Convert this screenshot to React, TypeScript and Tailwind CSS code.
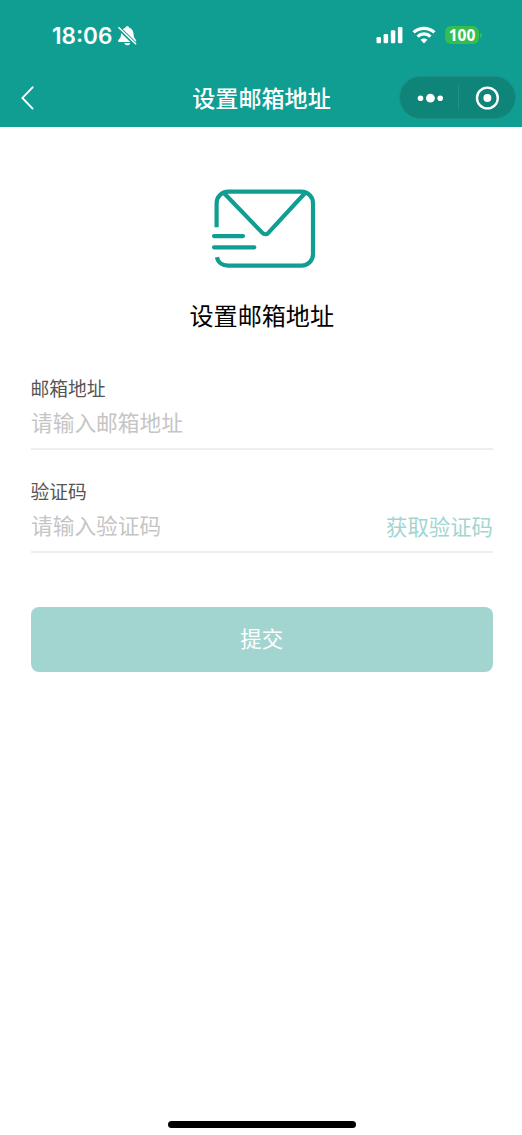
function StatusBar() {
  return (
    <div className="flex h-[70px] items-center text-white">
      <span className="ml-[52px] w-[61px] pt-px font-['Inter'] text-[22.5px] font-semibold leading-[70px]">18:06</span>
      {/* Muted bell */}
      <svg className="ml-[4.5px] mt-[2px]" width="19" height="20" viewBox="0 0 19 20" fill="none">
        <path
          d="M9.3 0.3c-1 0-1.8.6-2 1.5C4.3 2.8 3.2 5 3 8.3c-.1 2.8-.9 4-2.1 5.2-1.3 1.4-.8 2.5.4 2.5h15.8c1.2 0 1.6-1.2.5-2.5-1.2-1.3-1.9-2.4-2-5.2-.2-3.3-1.4-5.5-4.3-6.5-.2-.9-1-1.5-2-1.5Z"
          fill="currentColor"
        />
        <path d="M6.4 16.9h5.9c-.4 1.5-1.5 2.3-2.9 2.3s-2.6-.8-3-2.3Z" fill="currentColor" />
        <path d="M0 1.2 17.6 18.4" stroke="#119e92" strokeWidth="4" />
        <path d="M1 1.7 17.6 17.8" stroke="currentColor" strokeWidth="1.6" strokeLinecap="round" />
      </svg>
      <div className="ml-auto mr-[40px] flex items-center">
        <svg width="27" height="18" viewBox="0 0 27 18" fill="currentColor">
          <rect x="0.5" y="11" width="4.5" height="6.3" rx="1.3" />
          <rect x="7.6" y="8" width="4.5" height="9.3" rx="1.3" />
          <rect x="14.8" y="4.3" width="4.5" height="13" rx="1.3" />
          <rect x="21.9" y="0.9" width="4.5" height="16.4" rx="1.3" />
        </svg>
        <svg className="ml-[9px]" width="24" height="18" viewBox="0 0 24 18" fill="none" stroke="currentColor" strokeWidth="3.2">
          <path d="M1.6 6.4C7.5 .9 16.5.9 22.4 6.4" />
          <path d="M5.6 10.6C9.3 7 14.7 7 18.4 10.6" />
          <path d="m12 17.4-3.4-3.6c1.8-1.6 5-1.6 6.8 0Z" fill="currentColor" stroke="none" />
        </svg>
        <span className="ml-[9px] flex h-[18px] w-[34px] items-center justify-center rounded-[6px] bg-[#34be50] pt-px font-['Noto_Sans'] text-[15.5px] font-bold leading-none">
          100
        </span>
        <span className="ml-px h-[5px] w-[2px] rounded-r-full bg-[#34be50]" />
      </div>
    </div>
  );
}

function NavBar() {
  return (
    <div className="grid h-[56px] grid-cols-[122px_1fr_122px] items-center text-white">
      <button className="ml-[20px] w-[16px]">
        <svg width="16" height="24" viewBox="0 0 16 24" fill="none" stroke="currentColor" strokeWidth="1.9">
          <path d="M12.6 1.3 2.4 11.9 12.6 22.6" strokeLinecap="round" />
        </svg>
      </button>
      <h1 className="-mt-[3px] pl-px text-center text-[23.1px] font-medium leading-[30px]">设置邮箱地址</h1>
      <div className="-ml-px -mt-px flex h-[43px] w-[117px] items-center rounded-full border border-[#1c8f84] bg-[#0f8479]">
        <button className="flex w-[58px] justify-end pr-px">
          <svg width="40" height="12" viewBox="0 0 40 12" fill="currentColor">
            <circle cx="3.5" cy="6.2" r="2.8" />
            <circle cx="13.4" cy="6.2" r="4.4" />
            <circle cx="23.2" cy="6.2" r="2.8" />
          </svg>
        </button>
        <span className="h-[25px] w-px bg-[#238f85]" />
        <button className="flex flex-1 justify-center">
          <svg width="24" height="24" viewBox="0 0 24 24" fill="none">
            <circle cx="12.4" cy="12" r="10.4" stroke="currentColor" strokeWidth="2.4" />
            <circle cx="12.4" cy="12" r="4" fill="currentColor" />
          </svg>
        </button>
      </div>
    </div>
  );
}

function MailIcon() {
  return (
    <svg className="mx-auto" width="108" height="80" viewBox="-3 -0.9 108 80" fill="none" stroke="#119e92" strokeWidth="4.2">
      <path d="M5.6 38.3V14.3a11.5 11.5 0 0 1 11.5-11.5h73.4a11.5 11.5 0 0 1 11.5 11.5v51a11.5 11.5 0 0 1-11.5 11.5h-73.4c-5.8 0-10.2-3.2-11.1-8.5" />
      <path d="m13.4 4.6 38 39.4c1.7 1.7 4.2 1.7 5.9 0L93.6 4.6" />
      <path d="M3 47.2h29M3 58.4h40.3" strokeLinecap="round" />
    </svg>
  );
}

export default function App() {
  return (
    <div className="flex h-[1135px] w-[522px] flex-col bg-white font-['Noto_Sans_CJK_SC',sans-serif]">
      <header className="h-[127px] bg-[#119e92]">
        <StatusBar />
        <NavBar />
      </header>

      <main className="flex-1 pl-[30.5px] pr-[29px] pt-[61px]">
        <MailIcon />
        <h2 className="mt-[29px] text-center text-[24.1px] leading-[36px]">设置邮箱地址</h2>

        <form>
          <div className="mt-[41px] h-[76px] border-b-2 border-[#eeeeee]">
            <label className="block text-[18.75px] leading-[28px] text-[#555555]">邮箱地址</label>
            <div className="mt-[4px] pl-[0.5px] text-[21.7px] leading-[32px] text-[#c5c5c5]">请输入邮箱地址</div>
          </div>
          <div className="mt-[27px] h-[76px] border-b-2 border-[#eeeeee]">
            <label className="block text-[18.75px] leading-[28px] text-[#555555]">验证码</label>
            <div className="mt-[4px] flex justify-between pl-[0.5px] text-[21.7px] leading-[32px]">
              <span className="text-[#c5c5c5]">请输入验证码</span>
              <button type="button" className="mt-px text-[21.4px] text-[#a3d5d0]">获取验证码</button>
            </div>
          </div>
          <button type="button" className="mt-[54px] block h-[65px] w-full rounded-[8px] bg-[#a3d5d0] pb-[2px] text-[21.4px] text-white">
            提交
          </button>
        </form>
      </main>

      {/* Home indicator */}
      <div className="mb-[7px] ml-[168px] h-[7px] w-[188px] rounded-full bg-black" />
    </div>
  );
}
